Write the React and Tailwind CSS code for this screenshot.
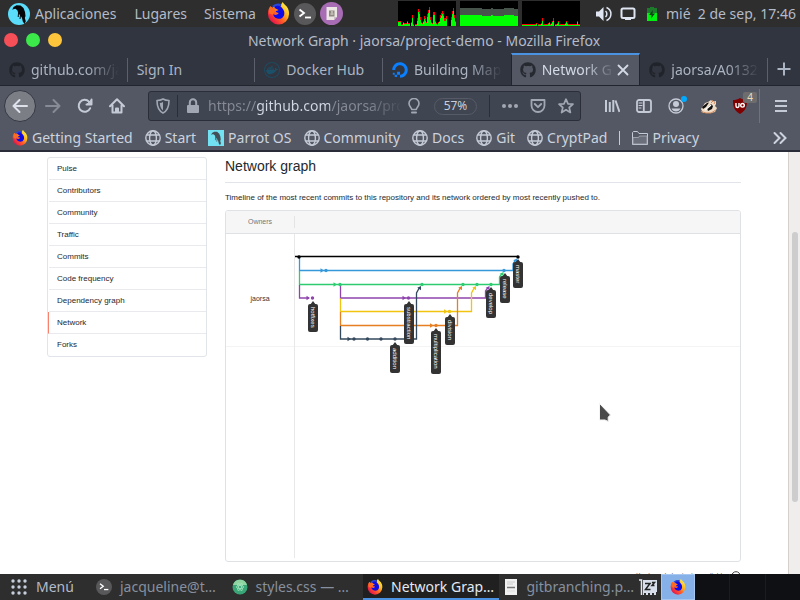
import React from "react";
import { FaGithub, FaDocker, FaDigitalOcean } from "react-icons/fa";

const FirefoxIcon = ({ size = 16 }) => (
  <svg width={size} height={size} viewBox="0 0 24 24" className="shrink-0" aria-hidden="true">
    <defs>
      <linearGradient id="ffBody" x1="0.9" y1="0.1" x2="0.15" y2="0.85">
        <stop offset="0" stopColor="#fff44f" />
        <stop offset="0.35" stopColor="#ffb01e" />
        <stop offset="0.62" stopColor="#ff5f26" />
        <stop offset="1" stopColor="#e8154c" />
      </linearGradient>
    </defs>
    <path d="M3.500 4.500C1.600 6.600 1 9.600 1 12.400a11 11 0 0 0 22 .1c.2-4-1.600-7.200-3.800-9C18.200 2.400 17 1.400 16.500 0c-1.700 1.600-2 3.200-1.700 4.500L8 4 5.500 6z" fill="url(#ffBody)" />
    <path d="M5 4.500C7.500 1.500 12 .8 14.600 2c-.5 1-.4 2-.1 2.800L9 6z" fill="#2a46d8" />
    <path d="M8.500 4.500c3-1.500 6-.5 7.200 1.700 2 1.800 3 4.800 2.100 7.500-1 3-4 4.300-7 3.600-2.500-.6-4-2.300-4.300-4.800 1.200 1 2.700 1.200 4 .6 1-.4 1.200-1 1.700-1.600-1-.5-2.600-.4-3.200-1.500.5-1 2-1 3-1.700C10.800 7.500 9 7.200 8 6z" fill="#0d0ae6" />
    <path d="M3.500 4.600c1 .2 1.700.9 2.200 1.700 1.200-.3 2.200-.2 3.100.3-1.300.9-1.600 2.400-.8 3.400-1.200.8-1.700 2-1.500 3.200L2.500 12C2 9 2.200 6.500 3.500 4.600z" fill="#ff6a20" />
  </svg>
);

const ParrotIcon = ({ size = 22, square = false }) => (
  <svg width={size} height={size} viewBox="0 0 22 22" className="shrink-0" aria-hidden="true">
    {square ? <rect width="22" height="22" fill="#72e2f2" /> : <circle cx="11" cy="11" r="11" fill="#5adcfa" />}
    <path
      d="M4.300 6.800L5.500 4 8.500 2.300l4 .2L15.500 5 17 9l.5 4-.7 2 1 3.200L16.500 21l-1.700-2.500L14 15l-1.700-2.800-2-1.700-.8-3L7.500 5.800 6 6z"
      fill={square ? "#445058" : "#050608"}
    />
    <path d="M10.500 10l-.3 4M12.500 12l-.5 4" stroke={square ? "#445058" : "#050608"} strokeWidth="1" />
  </svg>
);

const TerminalIcon = ({ size = 16 }) => (
  <svg width={size} height={size} viewBox="0 0 22 22" className="shrink-0" aria-hidden="true">
    <circle cx="11" cy="11" r="11" fill="#58585a" />
    <path d="M5.500 6.500l4.500 3.500-4.500 3.500" fill="none" stroke="#fff" strokeWidth="1.800" />
    <path d="M11 14.500h6" stroke="#fff" strokeWidth="1.800" />
  </svg>
);

const GlobeIcon = () => (
  <svg width="16" height="16" viewBox="0 0 16 16" fill="none" stroke="#c4cad6" strokeWidth="1.400" className="shrink-0" aria-hidden="true">
    <circle cx="8" cy="8" r="7.200" />
    <ellipse cx="8" cy="8" rx="3.400" ry="7.200" />
    <path d="M2 5h12M2 11h12" strokeWidth="1.400" />
  </svg>
);

const FolderIcon = () => (
  <svg width="16" height="16" viewBox="0 0 16 16" fill="none" stroke="#c4cad6" className="shrink-0" aria-hidden="true">
    <path d="M.5 14.500v-12l1-1h4l1.500 2h8.500v11z" />
    <path d="M1 7.500h5.500l1-1.500H15V14H1z" fill="#6b6f7b" stroke="#a9aeb9" strokeWidth=".8" />
  </svg>
);

const Line = ({ children, size = 16, w = 2, className = "" }) => (
  <svg
    width={size}
    height={size}
    viewBox="0 0 16 16"
    fill="none"
    stroke="currentColor"
    strokeWidth={w}
    strokeLinecap="round"
    strokeLinejoin="round"
    className={"shrink-0 " + className}
    aria-hidden="true"
  >
    {children}
  </svg>
);

const CPU = [4, 4, 4, 1, 1, 3, 2, 2, 2, 4, 2, 2, 0, 3, 8, 1, 0, 1, 1, 5, 14, 12, 6, 3, 2, 4, 7, 5, 3, 9, 13, 16, 6, 3, 2, 11, 11, 4, 2, 1, 3, 4, 8, 10, 12, 10, 5, 5, 7, 0, 0, 0, 0, 6, 12, 15, 8, 4];
const NET = [1, 1, 1, 1, 1, 1, 1, 1, 1, 1, 1, 1, 1, 1, 2, 0, 1, 1, 1, 2, 5, 1, 1, 1, 1, 1, 2, 3, 1, 2, 4, 5, 0, 1, 1, 2, 4, 1, 1, 1, 1, 1, 1, 2, 4, 2, 1, 1, 1, 1, 1, 1, 1, 1, 1, 4, 1, 1];

const LoadGraph = ({ data, label }) => (
  <svg width="58" height="25" viewBox="0 0 58 25" shapeRendering="crispEdges" role="img" aria-label={label} className="bg-black">
    {data.map((v, i) =>
      v ? (
        <g key={i}>
          <rect x={i} y={25 - v - (v > 4 ? 3 : 1)} width="1" height={v > 4 ? 3 : 1} fill="#f00" />
          <rect x={i} y={25 - v} width="1" height={v} fill="#0f0" />
        </g>
      ) : null
    )}
  </svg>
);

function TopPanel() {
  return (
    <header className="flex h-[27px] shrink-0 items-center bg-[#2e2e2e] pl-2 pr-1 text-[#b3bbc8]">
      <button className="flex items-center gap-[5px]">
        <ParrotIcon />
        Aplicaciones
      </button>
      <button className="ml-[18px]">Lugares</button>
      <button className="ml-[17px]">Sistema</button>
      <div className="ml-[11px] flex items-center gap-[4px]">
        <button aria-label="Firefox"><FirefoxIcon size={23} /></button>
        <button aria-label="Terminal"><TerminalIcon size={22} /></button>
        <button aria-label="Editor">
          <svg width="23" height="23" viewBox="0 0 23 23">
            <circle cx="11.500" cy="11.500" r="11.500" fill="#a76cb3" />
            <path d="M6.500 5h10.500v9.500L14 18H6.500z" fill="#ece6e4" />
            <path d="M9 8.500h5.500v6H9z" fill="#8f8a80" />
            <path d="M11 10h2M10.500 12h3" stroke="#ece6e4" strokeWidth="1" />
            <path d="M14 18v-3h3z" fill="#c9c0c4" />
          </svg>
        </button>
      </div>
      <div className="ml-auto flex items-center gap-1">
        <LoadGraph data={CPU} label="CPU" />
        <svg width="58" height="25" viewBox="0 0 58 25" shapeRendering="crispEdges" role="img" aria-label="RAM" className="bg-black">
          <path d="M0 7h22v1h9v-1h2v1h11v-1h10v1h4v17H0z" fill="#46544c" />
          <path d="M0 14h22v1h9v-1h2v1h11v-1h10v1h4v10H0z" fill="#0f0" />
        </svg>
        <LoadGraph data={NET} label="Red" />
      </div>
      <svg width="16" height="16" viewBox="0 0 16 16" className="ml-4" aria-hidden="true">
        <path d="M0 5.500h3L7.500 1v14L3 10.500H0z" fill="#dfe5f1" />
        <path d="M9.500 5a4 4 0 0 1 0 6M10.500 1.500a7 7 0 0 1 0 13" fill="none" stroke="#dfe5f1" strokeWidth="1.500" />
      </svg>
      <svg width="16" height="16" viewBox="0 0 16 16" className="ml-2" aria-hidden="true">
        <rect x="1.500" y="2.500" width="13" height="9.500" rx="1.500" fill="none" stroke="#dfe5f1" strokeWidth="2" />
        <path d="M5 11h6v3H5z" fill="#dfe5f1" />
      </svg>
      <svg width="12" height="16" viewBox="0 0 12 16" className="ml-[10px]" aria-hidden="true">
        <path d="M1 2h3V1h4v1h3v13H1z" fill="#1c7a2a" />
        <path d="M1 7h10v8H1z" fill="#00f010" />
        <path d="M7 4L3 9h2.500l-.5 3.500L9 7.500H6.500z" fill="#14401c" />
      </svg>
      <time className="ml-2 whitespace-pre">mié  2 de sep, 17:46</time>
    </header>
  );
}

const FADE = "[mask-image:linear-gradient(to_left,transparent,black_32px)]";

function Tab({ icon, title, active, sep = true, fade }) {
  return (
    <div
      role="tab"
      aria-selected={!!active}
      className={
        "flex h-full min-w-0 flex-1 items-center " +
        (active ? "border-x border-t-2 border-x-[#20242d] border-t-[#4b92e2] bg-[#545864] text-[#d3dae6]" : "pt-[2px]")
      }
    >
      <div className={"flex min-w-0 flex-1 items-center gap-[6px] " + (active ? "pl-2" : "pl-[9px]")}>
        {icon}
        <span className={"min-w-0 flex-1 whitespace-nowrap " + (fade ? FADE : "")}>{title}</span>
      </div>
      {active ? (
        <button aria-label="Cerrar" className="mr-2">
          <Line size={16} w={1.8}><path d="M3.500 3.500l9 9M12.500 3.500l-9 9" /></Line>
        </button>
      ) : (
        <div className={"ml-[8px] h-6 w-px " + (sep ? "bg-[#5b606c]" : "")} />
      )}
    </div>
  );
}

const GH = ({ className = "text-[#20242a]" }) => <FaGithub size={16} className={"shrink-0 " + className} />;

function Tabs() {
  return (
    <div role="tablist" className="flex h-[33px] shrink-0 items-center border-b border-[#22252e] bg-[#31353f] text-[#abb4c2]">
      <Tab icon={<GH />} title="github.com/ja" fade />
      <Tab title="Sign In" />
      <Tab icon={<FaDocker size={16} className="shrink-0 rounded-full p-[2px] text-[#1c5069] ring-1 ring-inset ring-[#1f4a60]" />} title="Docker Hub" />
      <Tab icon={<FaDigitalOcean size={16} className="shrink-0 text-[#0a80ff]" />} title="Building Map" fade sep={false} />
      <Tab icon={<GH className="text-[#262a30]" />} title="Network G" active fade />
      <Tab icon={<GH />} title="jaorsa/A0132" fade />
      <button aria-label="Nueva pestaña" className="flex w-8 items-center justify-center">
        <Line><path d="M8 1.500v13M1.500 8h13" strokeLinecap="butt" /></Line>
      </button>
    </div>
  );
}

const ToolButton = ({ label, children, className = "" }) => (
  <button aria-label={label} className={"flex h-8 w-8 shrink-0 items-center justify-center " + className}>{children}</button>
);

function NavBar() {
  return (
    <div className="flex h-10 shrink-0 items-center bg-[#545864] pl-1 pr-[3px] text-[#c4cad6]">
      <ToolButton label="Atrás" className="rounded-full border border-[#353943] bg-[#7c7e86] text-[#dde1ea]">
        <Line><path d="M15 8H1.500M7.500 2L1.500 8l6 6" /></Line>
      </ToolButton>
      <ToolButton label="Adelante" className="ml-px text-[#868b96]">
        <Line><path d="M1 8h13.500M8.500 2l6 6-6 6" /></Line>
      </ToolButton>
      <ToolButton label="Recargar">
        <Line><path d="M13.200 10.200A6 6 0 1 1 12 3.600M14.500 1.500v5h-5" /><path d="M14.500 2v4.500H10z" fill="currentColor" strokeWidth="1" /></Line>
      </ToolButton>
      <ToolButton label="Inicio">
        <Line><path d="M1 8.300L8 1.300l7 7M3.500 7.500V14.500h9V7.500" /><path d="M7 14v-3.500h2V14" /></Line>
      </ToolButton>
      <div className="ml-[15px] flex h-[30px] min-w-0 flex-1 items-center rounded-[3px] border border-[#2b2e39] bg-[#404552] text-[#a2a8b3]">
        <div className="flex w-7 justify-center">
          <Line w={1.6}><path d="M8 1c2 1.200 4 1.500 6 1.500 0 5.500-1 10-6 12.500C3 12.500 2 8 2 2.500 4 2.500 6 2.200 8 1z" /><path d="M8 4v8.500C5.800 10.800 5 8 4.800 5 6 4.900 7 4.600 8 4z" fill="currentColor" stroke="none" /></Line>
        </div>
        <div className="h-[22px] w-px bg-[#2b2e39]" />
        <svg width="14" height="16" viewBox="0 0 14 16" className="ml-2 shrink-0" aria-hidden="true">
          <rect x="1" y="7" width="12" height="8" rx="1" fill="currentColor" />
          <path d="M3.800 8V4.500a3.200 3.200 0 0 1 6.400 0V8" fill="none" stroke="currentColor" strokeWidth="2" />
        </svg>
        <input
          aria-label="Dirección"
          defaultValue="https://github.com/jaorsa/pro"
          className="ml-2 min-w-0 flex-1 bg-clip-text text-transparent outline-none bg-[linear-gradient(to_right,#858a96_48px,#d3dae6_48px,#d3dae6_122px,#858a96_122px,#858a96_160px,transparent_196px)]"
        />
        <Line w={1.6} className="ml-[6px]"><path d="M5.700 11.500C5.700 9.500 3 8.500 3 5.500a5 5 0 0 1 10 0c0 3-2.700 4-2.700 6z" /><path d="M6 14.500h4" strokeWidth="2" /></Line>
        <button className="ml-3 h-[17px] w-[43px] shrink-0 rounded-full border border-[#565b67] text-[12px] leading-[14px] text-[#c8ced9]">57%</button>
        <div className="ml-3 h-[22px] w-px bg-[#2b2e39]" />
        <Line className="ml-[12px]" w={1}><g fill="currentColor" stroke="none"><circle cx="2" cy="8" r="2" /><circle cx="8" cy="8" r="2" /><circle cx="14" cy="8" r="2" /></g></Line>
        <Line className="ml-3" w={1.8}><path d="M1.500 2h13v5.500a6.500 6.500 0 0 1-13 0z" /><path d="M4.800 6L8 9.200 11.200 6" /></Line>
        <Line className="ml-3 mr-[6px]" w={1.7}><path d="M8 1.200l2 4.600 5 .4-3.800 3.300 1.200 5L8 11.800l-4.400 2.700 1.200-5L1 6.200l5-.4z" /></Line>
      </div>
      <ToolButton label="Biblioteca" className="ml-[15px]">
        <Line><path d="M2 2v12M5.800 4v10M9.300 2v12" strokeLinecap="butt" /><path d="M11.500 2.500l4 11.500" strokeLinecap="butt" /></Line>
      </ToolButton>
      <ToolButton label="Barra lateral">
        <Line w={1.8}><rect x="1" y="2" width="14" height="12" rx="2" /><path d="M7.800 2v12" /><path d="M3 5h3M3 7.500h3M3 10h2" strokeWidth="1" /></Line>
      </ToolButton>
      <ToolButton label="Cuenta" className="relative">
        <Line w={1.3}><circle cx="8" cy="8" r="7" /><circle cx="8" cy="6" r="3" fill="currentColor" stroke="none" /><path d="M3.500 10.500h9c-.8 1.800-2.500 3-4.500 3s-3.700-1.200-4.500-3z" fill="currentColor" stroke="none" /></Line>
        <span className="absolute right-[5px] top-[6px] h-[6px] w-[6px] rounded-full bg-[#00aaff]" />
      </ToolButton>
      <ToolButton label="Privacy Badger">
        <svg width="17" height="15" viewBox="0 0 17 15" aria-hidden="true">
          <path d="M1 10l4-6 3-1 3-2 2 1 1 .5 2-.5v3l-1 2 2 2-2 4-4 1H3z" fill="#efdcc8" />
          <path d="M2 8l5-4 2-.5L6 8l-3 2zM7 9l4-4 2 2-1 3-4 2z" fill="#111" />
          <path d="M11 1.500l2 .5-2 2M15 3l-1 2M1 12.500l5 1.500h5l5-3" fill="none" stroke="#d48b5a" />
          <path d="M5 11l6-5" stroke="#fff" strokeWidth="1.500" />
        </svg>
      </ToolButton>
      <ToolButton label="uBlock Origin" className="relative">
        <svg width="16" height="16" viewBox="0 0 16 16" aria-hidden="true">
          <path d="M8 0c2.500 1.500 4.500 2 7 2 0 6-.5 10-7 14C1.500 12 1 8 1 2c2.500 0 4.500-.5 7-2z" fill="#800000" />
          <path d="M4 5v3a1.500 1.500 0 0 0 3 0V5" fill="none" stroke="#fff" strokeWidth="1.400" />
          <circle cx="10.500" cy="7.300" r="1.800" fill="none" stroke="#fff" strokeWidth="1.400" />
        </svg>
        <span className="absolute -right-[1px] top-[2px] h-[11px] w-[14px] rounded-[2px] bg-[#6d6d6d] text-center text-[10px] leading-[11px] text-[#ecdcb8]">4</span>
      </ToolButton>
      <div className="ml-[3px] h-[34px] w-px bg-[#6f737e]" />
      <ToolButton label="Menú" className="ml-[5px]">
        <Line><path d="M2 3h12M2 8h12M2 13h12" strokeLinecap="butt" /></Line>
      </ToolButton>
    </div>
  );
}

const BOOKMARKS = [
  [<FirefoxIcon size={16} />, "Getting Started"],
  [<GlobeIcon />, "Start"],
  [<ParrotIcon size={16} square />, "Parrot OS"],
  [<GlobeIcon />, "Community"],
  [<GlobeIcon />, "Docs"],
  [<GlobeIcon />, "Git"],
  [<GlobeIcon />, "CryptPad"],
];

function Bookmarks() {
  return (
    <nav className="flex h-[26px] shrink-0 items-center gap-3 border-b-2 border-[#2b2c3a] bg-[#545864] px-3 text-[#ccd3df]">
      {BOOKMARKS.map(([icon, name]) => (
        <a key={name} href="#" className="flex items-center gap-1 whitespace-nowrap">{icon}{name}</a>
      ))}
      <div className="h-[14px] w-px bg-[#c4cad6]" />
      <a href="#" className="flex items-center gap-1"><FolderIcon />Privacy</a>
      <button aria-label="Más marcadores" className="ml-auto"><Line><path d="M2.500 3l5 5-5 5M8.500 3l5 5-5 5" strokeLinejoin="miter" /></Line></button>
    </nav>
  );
}

const MENU = ["Pulse", "Contributors", "Community", "Traffic", "Commits", "Code frequency", "Dependency graph", "Network", "Forks"];

const C = { black: "#000", blue: "#3498db", green: "#2ecc71", purple: "#8e44ad", yellow: "#f1c40f", orange: "#e67e22", navy: "#34495e" };

const PATHS = [
  [C.black, "M295 256.500H518"],
  [C.blue, "M299.500 257V270.500H513V264L515.500 260"],
  [C.green, "M299.500 271V284.500H499.500V277L502 273.500"],
  [C.purple, "M299.500 285V298H309M340.500 285V298H485.500V291L488 287.500"],
  [C.yellow, "M340.500 298.500V311.500H471.500V293L474.500 287.500"],
  [C.orange, "M340.500 312V325.500H457.500V293L460.500 287.500"],
  [C.navy, "M340.500 326V339H416.500V293L419.500 287.500"],
];

const DOTS = [
  [C.black, [[299, 257], [518, 257]]],
  [C.blue, [[326, 270.5], [504, 270.5]]],
  [C.green, [[340, 284.5], [422, 284.5], [463, 284.5], [477, 284.5], [491, 284.5]]],
  [C.purple, [[312.5, 298], [408.5, 298]]],
  [C.yellow, [[449.5, 311.5]]],
  [C.orange, [[436, 325.5]]],
  [C.navy, [[354, 339], [367.5, 339], [381, 339], [395, 339]]],
];

const ARROWS = [
  [C.blue, 324, 270.5, 0],
  [C.green, 337, 284.5, 0],
  [C.purple, 310, 298, 0],
  [C.purple, 406, 298, 0],
  [C.yellow, 447.5, 311.5, 0],
  [C.orange, 433.5, 325.5, 0],
  [C.navy, 351, 339, 0],
  [C.blue, 517, 258.5, -58],
  [C.green, 503.5, 272, -58],
  [C.purple, 489.5, 286, -58],
  [C.yellow, 476, 286, -58],
  [C.orange, 462, 286, -58],
  [C.navy, 421, 286, -58],
];

const LABELS = [
  ["hotfixes", 313, 298, 28],
  ["addition", 395, 339, 28],
  ["substraction", 409, 298, 40],
  ["multiplication", 436, 325, 43],
  ["division", 450, 311, 28],
  ["develop", 491, 284, 28],
  ["release", 505, 270, 27],
  ["master", 518, 256, 26],
];

function NetworkGraph() {
  return (
    <svg className="block h-[327px] w-full font-['Liberation_Sans',Arial,sans-serif]" role="img" aria-label="Network graph">
      <path d="M0 112.500H2000" stroke="#f4f4f4" />
      <path d="M68.500 0V324" stroke="#e8e8e8" />
      <g transform="translate(-226 -234)">
        <text x="260" y="301" textAnchor="middle" fontSize="7" fill="#333">jaorsa</text>
        {PATHS.map(([c, d]) => <path key={c} d={d} fill="none" stroke={c} strokeWidth="1.300" />)}
        {ARROWS.map(([c, x, y, r], i) => (
          <path key={i} d="M0 0L-3.500 -2.200V2.200z" fill={c} transform={`translate(${x} ${y}) rotate(${r})`} />
        ))}
        {DOTS.map(([c, pts]) => pts.map(([x, y]) => <circle key={x} cx={x} cy={y} r="1.700" fill={c} />))}
        {LABELS.map(([name, x, y, h]) => (
          <g key={name}>
            <path d={`M${x} ${y + 3}l3 4h-6z`} fill="#333" />
            <rect x={x - 5} y={y + 6} width="10" height={h} rx="2" fill="#333" />
            <text transform={`translate(${x - 2} ${y + 9}) rotate(90)`} fontSize="6" fill="#fff">{name}</text>
          </g>
        ))}
      </g>
    </svg>
  );
}

function Page() {
  return (
    <div className="relative flex min-h-0 flex-1 overflow-hidden bg-white font-['Liberation_Sans',Arial,sans-serif] text-[8px] leading-3 text-[#24292e]">
      <main className="flex min-w-0 flex-1 items-start gap-[18px] px-[47px]">
        <nav className="mt-[5px] w-40 shrink-0 overflow-hidden rounded-[3px] border border-[#e1e4e8]">
          {MENU.map((m) => (
            <a
              key={m}
              href="#"
              className={
                "block h-[22px] border-b border-[#e8eaee] pl-2 pt-1 leading-[13px] last:border-b-0 " +
                (m === "Network" ? "border-l border-l-[#f9826c] bg-clip-padding" : "ml-px")
              }
            >
              {m}
            </a>
          ))}
        </nav>
        <section className="min-w-0 flex-1">
          <h2 className="mb-[9px] h-[31px] border-b border-[#e1e4e8] pt-[5px] text-[14px] leading-[18px]">Network graph</h2>
          <p className="mb-[6px]">Timeline of the most recent commits to this repository and its network ordered by most recently pushed to.</p>
          <div className="overflow-hidden rounded-[3px] border border-[#dfe2e5]">
            <div className="flex h-[23px] items-center border-b border-[#dfe2e5] bg-[#f6f6f6] text-[7px] text-[#777]">
              <span className="w-[68px] text-center">Owners</span>
              <span className="h-3 w-px bg-[#e4e4e4]" />
            </div>
            <NetworkGraph />
          </div>
          <div className="mt-2 flex items-center justify-end gap-[5px] text-[7px] text-[#586069]">
            Keyboard shortcuts available
            <svg width="10" height="10" viewBox="0 0 10 10" fill="none" stroke="#444" aria-hidden="true"><circle cx="5" cy="5" r="4.300" /><path d="M5 3v3" /></svg>
          </div>
        </section>
      </main>
      <div className="flex w-3 shrink-0 justify-center border-l border-[#d6d0cc] bg-[#efeeec] pt-20">
        <div className="h-[270px] w-[6px] rounded-full bg-[#cdcdcd]" />
      </div>
      <svg width="14" height="22" viewBox="0 0 14 22" className="absolute left-[599px] top-[250px]" aria-hidden="true">
        <path d="M.5 1.500L11.500 13 9.200 15v4.500L6 18H.5z" fill="#4a4a4a" stroke="#f4f4f4" />
      </svg>
    </div>
  );
}

const Task = ({ icon, title, active }) => (
  <button className={"flex h-full min-w-0 flex-1 items-center gap-2 whitespace-nowrap pl-1 " + (active ? "border-b-2 border-[#4b92e2] bg-[#202020] pt-[2px] text-[#e4e9f2]" : "text-[#87909e]")}>
    {icon}
    <span>{title}</span>
  </button>
);

function BottomPanel() {
  return (
    <footer className="flex h-[26px] shrink-0 items-center bg-[#2e2e2e]">
      <button className="flex w-[92px] shrink-0 items-center gap-[9px] pl-[11px] text-[#b3bbc8]">
        <svg width="16" height="16" viewBox="0 0 16 16" fill="#c6cddb" aria-hidden="true">
          {[2, 8, 14].map((y) => [2, 8, 14].map((x) => <circle key={x + "-" + y} cx={x} cy={y} r="1.700" />))}
        </svg>
        Menú
      </button>
      <Task icon={<TerminalIcon />} title="jacqueline@t…" />
      <Task
        icon={
          <svg width="16" height="16" viewBox="0 0 16 16" className="shrink-0" aria-hidden="true">
            <circle cx="8" cy="8" r="7.500" fill="#3aa678" />
            <path d="M1 6a7.300 7.300 0 0 1 14 0z" fill="#8ed3a0" />
            <g fill="none" stroke="#a6e6c0" strokeWidth=".7"><ellipse cx="8" cy="8" rx="4" ry="1.500" /><ellipse cx="8" cy="8" rx="4" ry="1.500" transform="rotate(60 8 8)" /><ellipse cx="8" cy="8" rx="4" ry="1.500" transform="rotate(120 8 8)" /></g>
          </svg>
        }
        title="styles.css — …"
      />
      <Task icon={<FirefoxIcon />} title="Network Grap…" active />
      <Task
        icon={
          <svg width="16" height="16" viewBox="0 0 16 16" className="shrink-0" aria-hidden="true">
            <path d="M2 0h12v16H2z" fill="#f1f1f1" />
            <path d="M4 3h8M4 5h6" stroke="#ccc" /><path d="M4 8.500h8" stroke="#777" strokeWidth="1.500" /><path d="M4 12h8" stroke="#ddd" />
          </svg>
        }
        title="gitbranching.p…"
      />
      <div className="flex w-[27px] shrink-0 justify-center">
        <svg width="18" height="17" viewBox="0 0 18 17" aria-hidden="true">
          <path d="M0 1h2.500v15" fill="none" stroke="#dfe5f1" strokeWidth="1.500" />
          <path d="M4 1h14v12h-1v3h-2v-2h-2v2h-2v-2H9v2H7v-2H5v2H4z" fill="#d9dfea" />
          <path d="M6 4.500h5L6.500 10.500h5M13 3.500h2.500L13 6.500h2.500" fill="none" stroke="#222" strokeWidth="1.500" />
        </svg>
      </div>
      <div className="flex h-full w-[139px] shrink-0 bg-[#0e1014]">
        <button aria-label="Escritorio 1" className="flex h-full w-[34px] items-center justify-center border border-[#a6c8f0] bg-[#86b0e8]"><FirefoxIcon /></button>
        <button aria-label="Escritorio 2" className="flex-1 border-r border-[#1a1c21]" />
        <button aria-label="Escritorio 3" className="flex-1 border-r border-[#1a1c21]" />
        <button aria-label="Escritorio 4" className="flex-1" />
      </div>
    </footer>
  );
}

export default function App() {
  return (
    <div className="flex h-screen flex-col overflow-hidden font-['Noto_Sans',sans-serif] text-[14px] leading-5">
      <TopPanel />
      <div className="relative flex h-[26px] shrink-0 items-center justify-center bg-[#31353f] px-[62px] text-[#b3bbc8]">
        <div className="absolute left-1 flex gap-[8px]">
          <button aria-label="Cerrar ventana" className="h-[14px] w-[14px] rounded-full bg-[#f64f58]" />
          <button aria-label="Maximizar" className="h-[14px] w-[14px] rounded-full bg-[#3bea4a]" />
          <button aria-label="Minimizar" className="h-[14px] w-[14px] rounded-full bg-[#fcc53b]" />
        </div>
        <h1 className="truncate pl-12 pt-px">Network Graph · jaorsa/project-demo - Mozilla Firefox</h1>
      </div>
      <Tabs />
      <NavBar />
      <Bookmarks />
      <Page />
      <BottomPanel />
    </div>
  );
}
